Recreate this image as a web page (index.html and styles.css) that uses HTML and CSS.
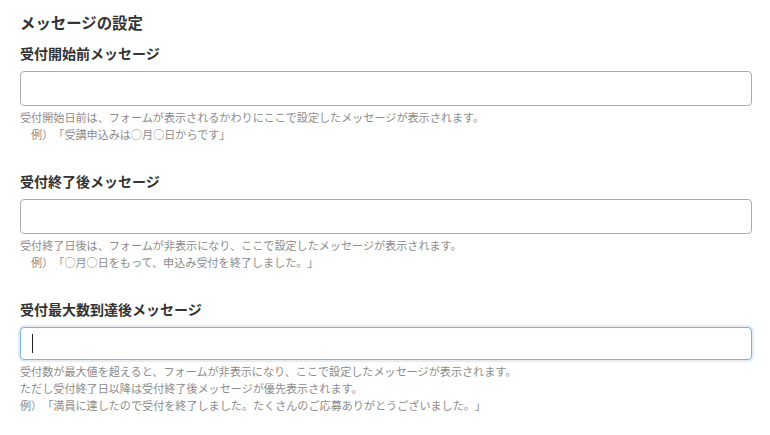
FILE: index.html
```html
<!DOCTYPE html>
<html lang="ja">
<head>
<meta charset="utf-8">
<link rel="stylesheet" href="styles.css">
</head>
<body>
<div class="page">
  <h2 class="title">メッセージの設定</h2>
  <section class="field">
    <h3 class="label">受付開始前メッセージ</h3>
    <div class="input"></div>
    <p class="help">受付開始日前は、フォームが表示されるかわりにここで設定したメッセージが表示されます。<br>　例）「受講申込みは○月○日からです」</p>
  </section>
  <section class="field">
    <h3 class="label">受付終了後メッセージ</h3>
    <div class="input"></div>
    <p class="help">受付終了日後は、フォームが非表示になり、ここで設定したメッセージが表示されます。<br>　例）「○月○日をもって、申込み受付を終了しました。」</p>
  </section>
  <section class="field">
    <h3 class="label">受付最大数到達後メッセージ</h3>
    <div class="input focused"><span class="caret"></span></div>
    <p class="help">受付数が最大値を超えると、フォームが非表示になり、ここで設定したメッセージが表示されます。<br>ただし受付終了日以降は受付終了後メッセージが優先表示されます。<br>例）「満員に達したので受付を終了しました。たくさんのご応募ありがとうございました。」</p>
  </section>
</div>
</body>
</html>
```

FILE: styles.css
```css
html, body {
  margin: 0;
  padding: 0;
  background: #fff;
}
body {
  font-family: "Noto Sans CJK JP", "Noto Sans", sans-serif;
  color: #333;
  text-spacing-trim: space-all;
}
.page {
  padding: 12px 18px 0 20px;
  display: flex;
  flex-direction: column;
}
.title {
  margin: 0 0 11px 0;
  font-size: 15.4px;
  line-height: 20px;
  font-weight: bold;
  color: #333;
}
.field {
  display: flex;
  flex-direction: column;
  margin-bottom: 28px;
}
.label {
  margin: 0 0 8px 0;
  font-size: 14px;
  line-height: 20px;
  font-weight: bold;
  color: #333;
}
.input {
  box-sizing: border-box;
  height: 35px;
  width: 732px;
  border: 1px solid #ababab;
  border-radius: 4px;
  background: #fff;
  display: flex;
  align-items: center;
  padding-left: 11px;
}
.input.focused {
  height: 33px;
  border-color: #7fb2d6;
  box-shadow: 0 0 0 2px #e3edf7;
}
.caret {
  width: 1px;
  height: 19px;
  background: #222;
}
.help {
  margin: 3px 0 0 0;
  font-size: 11.1px;
  line-height: 17px;
  color: #8c8c8c;
  text-spacing-trim: space-all;
}
```
